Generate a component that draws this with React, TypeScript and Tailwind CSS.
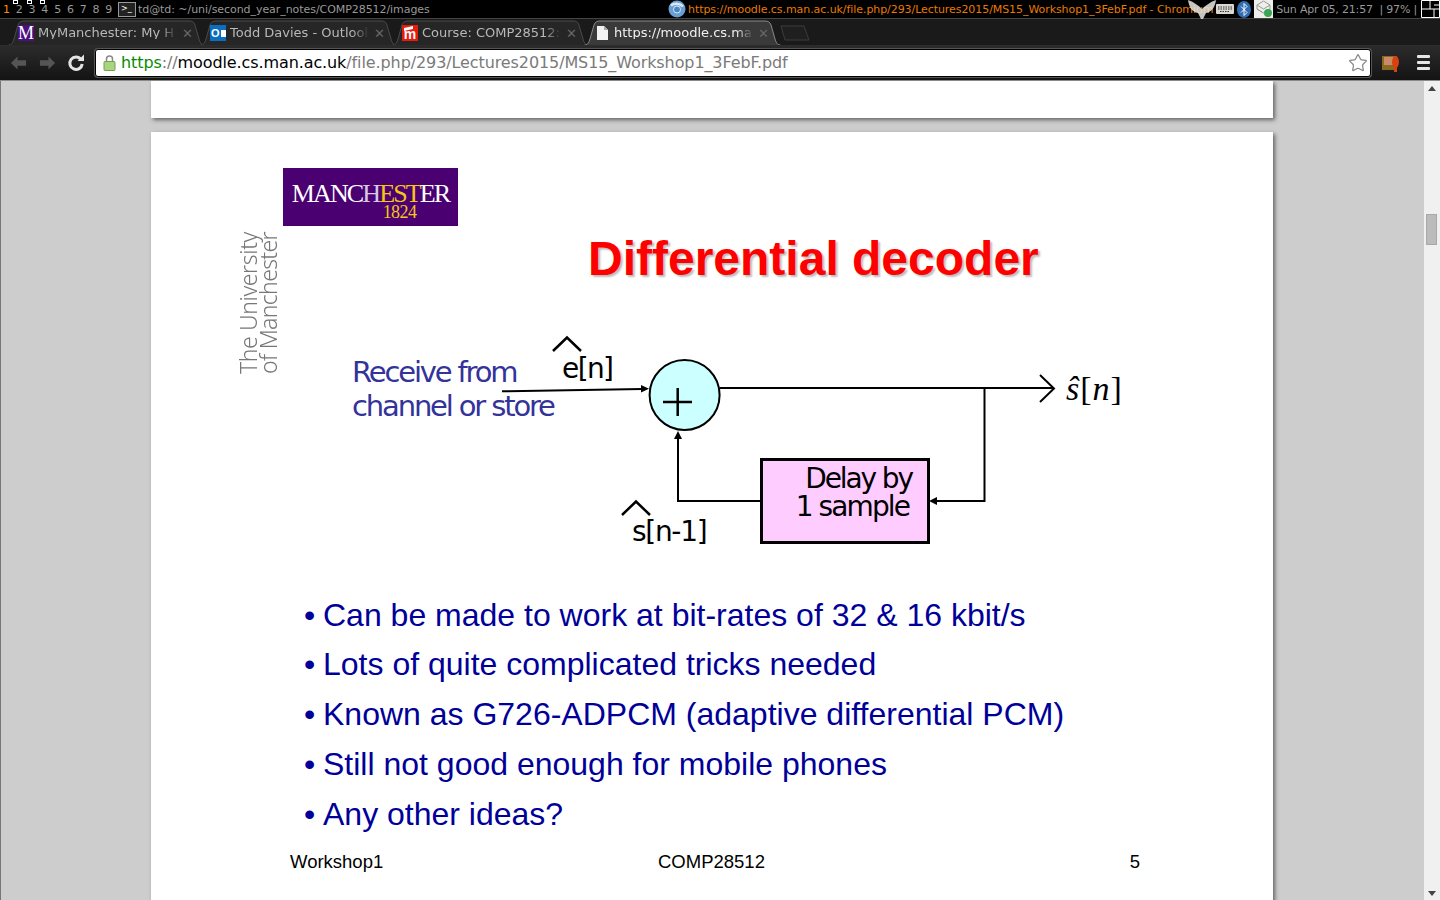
import React from 'react';
import { Star } from 'lucide-react';

const TABS = [
    { title: 'MyManchester: My H', active: false },
    { title: 'Todd Davies - Outlool', active: false },
    { title: 'Course: COMP28512:', active: false },
    { title: 'https://moodle.cs.ma', active: true },
];

const BULLETS = [
    'Can be made to work at bit-rates of 32 & 16 kbit/s',
    'Lots of quite complicated tricks needed',
    'Known as G726-ADPCM (adaptive differential PCM)',
    'Still not good enough for mobile phones',
    'Any other ideas?',
];

const FaviconM = () => (
    <span className="flex h-4 w-4 items-center justify-center bg-[#4b0f80] font-['Liberation_Serif',serif] text-[18px] leading-none text-white">M</span>
);

const FaviconOutlook = () => (
    <span className="flex h-4 w-4 items-center bg-[#0a6fc2] pl-[1px] font-['Liberation_Sans',sans-serif] text-[11px] font-bold leading-none text-white">
        O<span className="ml-[1px] h-[7px] w-[6px] bg-white" />
    </span>
);

const FaviconMoodle = () => (
    <span className="relative flex h-4 w-4 items-end justify-center overflow-hidden bg-[#e81c0c] font-['Liberation_Sans',sans-serif] text-[14px] font-bold leading-[14px] text-white">
        m
        <span className="absolute left-[2px] top-[2px] h-[3px] w-[9px] -skew-y-12 bg-white" />
    </span>
);

const FaviconPage = () => (
    <svg width="16" height="16" viewBox="0 0 16 16">
        <path d="M3 1h7l4 4v10H3z" fill="#f2f2f2" />
        <path d="M10 1v4h4z" fill="#aaa" />
    </svg>
);

const ICONS = [<FaviconM />, <FaviconOutlook />, <FaviconMoodle />, <FaviconPage />];

const Tab = ({ title, active, icon }: { title: string; active: boolean; icon: React.ReactNode }) => (
    <div className="relative flex h-[26px] w-[192px] shrink-0 items-center pl-[10px]">
        <svg className="absolute left-0 top-[-1px]" width="197" height="27" viewBox="0 0 197 27">
            <path
                d="M0.5 27 C4 27 5 24 6 21 L10 7 C11 4 13 3 16 3 L181 3 C184 3 186 4 187 7 L191 21 C192 24 193 27 196.5 27"
                fill={active ? '#3a3a3a' : '#262626'}
                stroke={active ? '#8a8a8a' : '#4a4a4a'}
            />
        </svg>
        <span className="relative mt-[2px] flex w-4 shrink-0 justify-center">{icon}</span>
        <span className={`relative ml-[4px] mt-[1px] w-[139px] whitespace-nowrap font-['DejaVu_Sans',sans-serif] text-[13px] leading-none [mask-image:linear-gradient(90deg,black_88%,transparent)] ${active ? 'text-[#f0f0f0]' : 'text-[#b8b8b8]'}`}>
            {title}
        </span>
        <span className="relative ml-[5px] mt-[2px] font-['DejaVu_Sans',sans-serif] text-[13px] font-bold leading-none text-[#666]">✕</span>
    </div>
);

const StatusBar = () => (
    <div className="relative flex h-[18px] shrink-0 items-center bg-black font-['DejaVu_Sans',sans-serif] text-[11px] leading-none text-[#999]">
        <div className="flex w-[668px] shrink-0 items-center">
            <div className="flex w-[118px] shrink-0 pl-[3px]">
                {[1, 2, 3, 4, 5, 6, 7, 8, 9].map((n) => (
                    <span key={n} className={`w-[13px] ${n === 1 ? 'text-[#ff8c00]' : ''}`}>{n}</span>
                ))}
            </div>
            <span className="flex h-[15px] w-[18px] items-center border border-[#999] bg-[#222] pl-[2px] text-[8px] text-white">&gt;_</span>
            <span className="ml-[2px] tracking-[-0.06px]">td@td: ~/uni/second_year_notes/COMP28512/images</span>
        </div>
        <svg width="18" height="18" viewBox="0 0 18 18" className="shrink-0">
            <circle cx="9" cy="9" r="8.5" fill="#6a9fd4" />
            <path d="M3 5.5C6 3 12 3 15 6.5" fill="none" stroke="#dce8f4" strokeWidth="2.5" />
            <circle cx="9" cy="9.5" r="3.5" fill="#4a86c8" stroke="#dce8f4" strokeWidth="1" />
        </svg>
        <span className="ml-[2px] whitespace-nowrap tracking-[-0.07px] text-[#e87a00]">https://moodle.cs.man.ac.uk/file.php/293/Lectures2015/MS15_Workshop1_3FebF.pdf - Chromium</span>
        <div className="ml-auto flex items-center">
            <svg width="18" height="10" viewBox="0 0 18 10" className="mr-[3px]">
                <rect width="18" height="10" rx="1" fill="#d8d8d0" />
                <path d="M2 3h14M2 5h14M4 7.5h10" stroke="#333" strokeDasharray="1.5 1" />
            </svg>
            <svg width="14" height="17" viewBox="0 0 14 17" className="mr-[3px]">
                <ellipse cx="7" cy="8.5" rx="7" ry="8.5" fill="#2f6db5" />
                <path d="M4 5.5l6 6-3 3V2.5l3 3-6 6" fill="none" stroke="#fff" />
            </svg>
            <svg width="19" height="18" viewBox="0 0 19 18" className="mr-[3px]">
                <rect width="19" height="18" fill="#eeeeea" />
                <path d="M9.5 1L3 5l6.5 4L16 5zM3 5v4l6.5 4L16 9V5M3 9l6.5 4" fill="none" stroke="#999" />
                <circle cx="14" cy="13" r="4" fill="#3aa655" />
            </svg>
            <span className="whitespace-pre tracking-[-0.18px]">Sun Apr 05, 21:57  | 97% |</span>
            <svg width="19" height="18" viewBox="0 0 19 18" className="ml-[4px]">
                <path d="M.5 .5h18v17H.5zM.5 9h18M9 .5v8.5M13 9v8.5M13 5h5.5" fill="none" stroke="#fff" />
            </svg>
        </div>
        <span className="absolute left-[13px] top-0 h-[4px] w-[5px] border border-white" />
        <span className="absolute left-[27px] top-0 h-[4px] w-[5px] border border-white" />
        <span className="absolute left-[40px] top-0 h-[4px] w-[5px] border border-white" />
        <svg width="28" height="19" viewBox="0 0 28 19" className="absolute left-[1188px] top-0">
            <path d="M0 0C6 2 11 6 14 9 17 6 22 2 28 0 27 7 24 12 18 13L15 19H13L10 13C4 12 1 7 0 0Z" fill="#e8e8e0" opacity="0.85" />
        </svg>
    </div>
);

const TabStrip = () => (
    <div className="flex h-[27px] shrink-0 border-t border-[#444] bg-[#1a1a1a] pl-[8px]">
        {TABS.map((t, i) => (
            <Tab key={t.title} title={t.title} active={t.active} icon={ICONS[i]} />
        ))}
        <svg width="30" height="16" viewBox="0 0 30 16" className="ml-[4px] mt-[6px]">
            <path d="M1 1H24L29 15H5Z" fill="#1f1f1f" stroke="#3c3c3c" />
        </svg>
    </div>
);

const Toolbar = () => (
    <div className="flex h-[36px] shrink-0 items-center border-b border-[#8a8a8a] bg-gradient-to-b from-[#2c2c2c] to-[#141414] pl-[10px]">
        <svg width="17" height="16" viewBox="0 0 18 16">
            <path d="M8 1L1 8l7 7V11h9V5H8z" fill="#555" />
        </svg>
        <svg width="17" height="16" viewBox="0 0 18 16" className="ml-[12px]">
            <path d="M10 1l7 7-7 7V11H1V5h9z" fill="#555" />
        </svg>
        <svg width="18" height="18" viewBox="0 0 18 18" className="ml-[11px]">
            <path d="M14 5.5A6.2 6.2 0 1 0 15.2 10" fill="none" stroke="#e4e4e4" strokeWidth="3" />
            <path d="M10.5 7H17V.5z" fill="#e4e4e4" />
        </svg>
        <div className="ml-[10px] flex h-[28px] w-[1276px] items-center rounded-[3px] border border-black bg-white pl-[7px] shadow-[0_0_0_1px_#555]">
            <svg width="13" height="17" viewBox="0 0 13 17">
                <path d="M3.5 8V5a3 3 0 0 1 6 0v3" fill="none" stroke="#888" strokeWidth="1.5" />
                <rect x="1" y="7.5" width="11" height="9" rx="1" fill="#a8d67c" stroke="#7a9a5a" />
            </svg>
            <span className="ml-[5px] whitespace-nowrap font-['DejaVu_Sans',sans-serif] text-[16px] leading-none tracking-[-0.1px] text-[#7a7a7a]">
                <span className="text-[#0a8a00]">https</span>://<span className="text-black">moodle.cs.man.ac.uk</span>/file.php/293/Lectures2015/MS15_Workshop1_3FebF.pdf
            </span>
            <Star className="ml-auto mr-[2px] h-[20px] w-[20px] text-[#888]" strokeWidth={1.5} />
        </div>
        <svg width="18" height="18" viewBox="0 0 18 18" className="ml-[11px]">
            <rect x="0" y="2" width="15" height="14" fill="#8a6a20" />
            <rect x="2" y="3" width="10" height="8" fill="#c98a6a" />
            <ellipse cx="13.5" cy="8" rx="3.5" ry="6" fill="#d8400f" />
            <rect x="12" y="14" width="3" height="4" fill="#d8400f" />
        </svg>
        <div className="ml-[17px] flex w-[13px] flex-col gap-[3px]">
            <span className="h-[3px] rounded-[1px] bg-[#e6e6e6]" />
            <span className="h-[3px] rounded-[1px] bg-[#e6e6e6]" />
            <span className="h-[3px] rounded-[1px] bg-[#e6e6e6]" />
        </div>
    </div>
);

// everything in here uses page coordinates through the viewBox
const DiagramLines = () => (
    <svg className="absolute left-0 top-0" width="1122" height="458" viewBox="151 132 1122 458">
        <g fill="none" stroke="#000" strokeWidth="2">
            <path d="M502 391.3L642 388.9" />
            <path d="M720 388H1053" />
            <path d="M1040 375L1054 388.5 1040 402" />
            <path d="M984.5 388V501H936" />
            <path d="M761 501H678V438" />
            <path d="M553 351L567 337.5 581 351" strokeWidth="2.5" />
            <path d="M622 515L636 501.5 650 515" strokeWidth="2.5" />
        </g>
        <path d="M649 388.7L641 385V392.5Z" fill="#000" />
        <path d="M678 431L674 439H682Z" fill="#000" />
        <path d="M929 501L937 497V505Z" fill="#000" />
        <circle cx="684.6" cy="395" r="35" fill="#ccffff" stroke="#000" strokeWidth="2" />
        <path d="M663 402H692M677.7 388V416" stroke="#000" strokeWidth="2.5" />
    </svg>
);

const Slide = () => (
    <div className="flex h-[790px] w-[1122px] shrink-0 flex-col bg-white shadow-[2px_2px_4px_#666]">
        <div className="relative h-[458px] shrink-0">
            <DiagramLines />
            <div className="absolute left-[132px] top-[36px] flex h-[58px] w-[175px] flex-col items-center bg-[#4b0072] pt-[13px] font-['Liberation_Serif',serif] leading-none">
                <span className="text-[26px] tracking-[-1.9px] text-white">
                    MANC<span className="text-[#d8c8e8]">H</span><span className="text-[#f5c518]">EST</span>ER
                </span>
                <span className="ml-[58px] mt-[-4px] text-[18px] tracking-[-0.6px] text-[#f5c518]">1824</span>
            </div>
            <div className="absolute left-[87px] top-[100px] flex rotate-180 flex-col whitespace-nowrap font-['Noto_Sans',sans-serif] text-[23px] font-light leading-[20px] text-[#777] [writing-mode:vertical-rl]">
                <span className="tracking-[-0.4px]">The University</span>
                <span className="tracking-[-0.65px]">of Manchester</span>
            </div>
            <h1 className="absolute left-[437px] top-[99px] whitespace-nowrap font-['Liberation_Sans',sans-serif] text-[48px] font-bold leading-[56px] text-[#ff0000] [text-shadow:2px_2px_2px_#bbb]">
                Differential decoder
            </h1>
            <div className="absolute left-[201px] top-[223px] whitespace-nowrap font-['DejaVu_Sans',sans-serif] text-[29px] leading-[34px] tracking-[-2.15px] text-[#333399]">
                Receive from<br />channel or store
            </div>
            <span className="absolute left-[411px] top-[219px] font-['DejaVu_Sans',sans-serif] text-[28px] leading-[36px] tracking-[-1.6px] text-black">e[n]</span>
            <span className="absolute left-[481px] top-[382px] font-['DejaVu_Sans',sans-serif] text-[28px] leading-[36px] tracking-[-1.3px] text-black">s[n-1]</span>
            <span className="absolute left-[915px] top-[237px] font-['Liberation_Serif',serif] text-[34px] leading-[40px] tracking-[1px] text-black">
                <span className="italic">ŝ</span>[<span className="italic">n</span>]
            </span>
            <div className="absolute left-[609px] top-[326px] flex h-[86px] w-[170px] flex-col items-end border-[3px] border-black bg-[#ffccff] pr-[15px] pt-[4px] font-['DejaVu_Sans',sans-serif] text-[28px] leading-[28px] text-black">
                <span className="tracking-[-2.1px]">Delay by</span>
                <span className="mr-[3px] tracking-[-1.9px]">1 sample</span>
            </div>
        </div>
        <ul className="ml-[153px] mt-[0.5px] flex flex-col font-['Liberation_Sans',sans-serif] text-[32px] leading-[49.75px] text-[#000099]">
            {BULLETS.map((b) => (
                <li key={b} className="flex whitespace-nowrap">
                    <span className="w-[19px] shrink-0">•</span>
                    {b}
                </li>
            ))}
        </ul>
        <div className="ml-[139px] mr-[133px] mt-[10.5px] grid grid-cols-[368px_1fr_auto] font-['Liberation_Sans',sans-serif] text-[18.5px] leading-[24px] text-black">
            <span>Workshop1</span>
            <span>COMP28512</span>
            <span>5</span>
        </div>
    </div>
);

const Scrollbar = () => (
    <div className="flex w-[16px] shrink-0 flex-col items-center bg-[#f0f0f0]">
        <span className="mt-[5px] h-0 w-0 border-x-[4px] border-b-[5px] border-x-transparent border-b-[#444]" />
        <span className="mt-[123px] h-[31px] w-[11px] self-start ml-[2px] border border-[#a8a8a8] bg-[#bbb]" />
        <span className="mt-auto mb-[4px] h-0 w-0 border-x-[4px] border-t-[5px] border-x-transparent border-t-[#444]" />
    </div>
);

const App = () => {
    return (
        <div className="flex h-[900px] w-[1440px] flex-col overflow-hidden bg-black">
            <StatusBar />
            <TabStrip />
            <Toolbar />
            <main className="flex min-h-0 flex-1 border-l border-[#777] bg-[#cdcdcd]">
                <div className="flex min-w-0 flex-1 flex-col gap-[14px] overflow-hidden pl-[150px]">
                    <div className="h-[37px] w-[1122px] shrink-0 bg-white shadow-[2px_2px_4px_#666]" />
                    <Slide />
                </div>
                <Scrollbar />
            </main>
        </div>
    );
};

export default App;
